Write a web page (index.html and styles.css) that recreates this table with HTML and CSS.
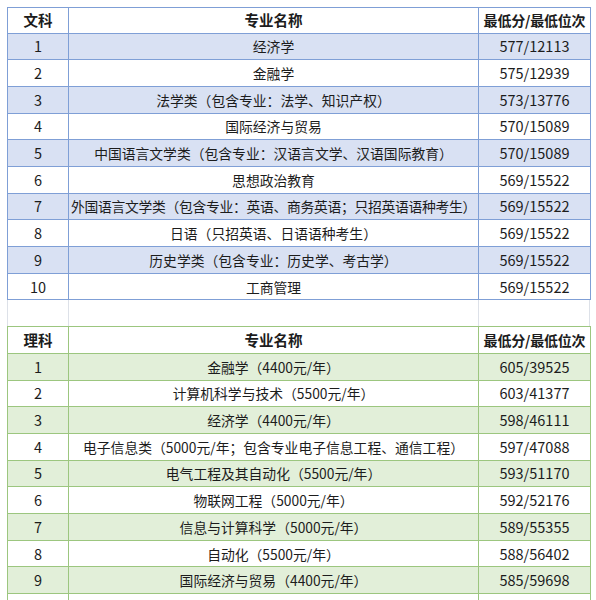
FILE: index.html
```html
<!DOCTYPE html>
<html lang="zh">
<head>
<meta charset="utf-8">
<link rel="stylesheet" href="styles.css">
</head>
<body>
<div class="sheet">
  <table class="grid blue">
    <colgroup><col class="c1"><col class="c2"><col class="c3"></colgroup>
    <tr class="head"><th>文科</th><th>专业名称</th><th class="wide">最低分/最低位次</th></tr>
    <tr class="fill"><td>1</td><td>经济学</td><td>577/12113</td></tr>
    <tr><td>2</td><td>金融学</td><td>575/12939</td></tr>
    <tr class="fill"><td>3</td><td>法学类（包含专业：法学、知识产权）</td><td>573/13776</td></tr>
    <tr><td>4</td><td>国际经济与贸易</td><td>570/15089</td></tr>
    <tr class="fill"><td>5</td><td>中国语言文学类（包含专业：汉语言文学、汉语国际教育）</td><td>570/15089</td></tr>
    <tr><td>6</td><td>思想政治教育</td><td>569/15522</td></tr>
    <tr class="fill"><td>7</td><td class="tight">外国语言文学类（包含专业：英语、商务英语；只招英语语种考生）</td><td>569/15522</td></tr>
    <tr><td>8</td><td>日语（只招英语、日语语种考生）</td><td>569/15522</td></tr>
    <tr class="fill"><td>9</td><td>历史学类（包含专业：历史学、考古学）</td><td>569/15522</td></tr>
    <tr><td>10</td><td>工商管理</td><td>569/15522</td></tr>
  </table>
  <div class="gap"><span></span><span></span><span></span></div>
  <table class="grid green">
    <colgroup><col class="c1"><col class="c2"><col class="c3"></colgroup>
    <tr class="head"><th>理科</th><th>专业名称</th><th class="wide">最低分/最低位次</th></tr>
    <tr class="fill"><td>1</td><td>金融学（4400元/年）</td><td>605/39525</td></tr>
    <tr><td>2</td><td>计算机科学与技术（5500元/年）</td><td>603/41377</td></tr>
    <tr class="fill"><td>3</td><td>经济学（4400元/年）</td><td>598/46111</td></tr>
    <tr><td>4</td><td>电子信息类（5000元/年；包含专业电子信息工程、通信工程）</td><td>597/47088</td></tr>
    <tr class="fill"><td>5</td><td>电气工程及其自动化（5500元/年）</td><td>593/51170</td></tr>
    <tr><td>6</td><td>物联网工程（5000元/年）</td><td>592/52176</td></tr>
    <tr class="fill"><td>7</td><td>信息与计算科学（5000元/年）</td><td>589/55355</td></tr>
    <tr><td>8</td><td>自动化（5500元/年）</td><td>588/56402</td></tr>
    <tr class="fill"><td>9</td><td>国际经济与贸易（4400元/年）</td><td>585/59698</td></tr>
    <tr><td>10</td><td>数据科学与大数据技术（5500元/年）</td><td>584/60117</td></tr>
  </table>
</div>
</body>
</html>
```
FILE: styles.css
```css
html, body {
  margin: 0;
  padding: 0;
  background: #ffffff;
}
body {
  font-family: "Noto Sans CJK SC", "Noto Sans", sans-serif;
  color: #1c1c1c;
}
.sheet {
  padding: 7px 0 0 7px;
  width: 583px;
}
.grid {
  border-collapse: collapse;
  table-layout: fixed;
  width: 583px;
}
.c1 { width: 61px; }
.c2 { width: 410px; }
.c3 { width: 112px; }
.grid th, .grid td {
  padding: 0;
  text-align: center;
  white-space: nowrap;
  font-size: 13.8px;
  line-height: 18px;
  height: 25.7px;
  overflow: visible;
}
.grid td:first-child, .grid td:last-child { font-size: 14.5px; }
.grid th {
  font-weight: 700;
  font-size: 14.5px;
  background: #ffffff;
}
.grid .head th { height: 24.5px; }
.grid th.wide { font-size: 14px; letter-spacing: -0.2px; }
.grid td.tight { letter-spacing: -0.3px; }
.blue th, .blue td { border: 1px solid #7f9fd6; }
.blue .fill td { background: #d9e1f3; }
.green th, .green td { border: 1px solid #9cc67f; }
.green .fill td { background: #e2efd9; }
.green .head th { height: 25.5px; }
.gap {
  display: grid;
  grid-template-columns: 61px 410px 112px;
  height: 26px;
}
.gap span {
  border-left: 1px solid #dde1e8;
}
.gap span:last-child {
  border-right: 1px solid #dde1e8;
}
```
